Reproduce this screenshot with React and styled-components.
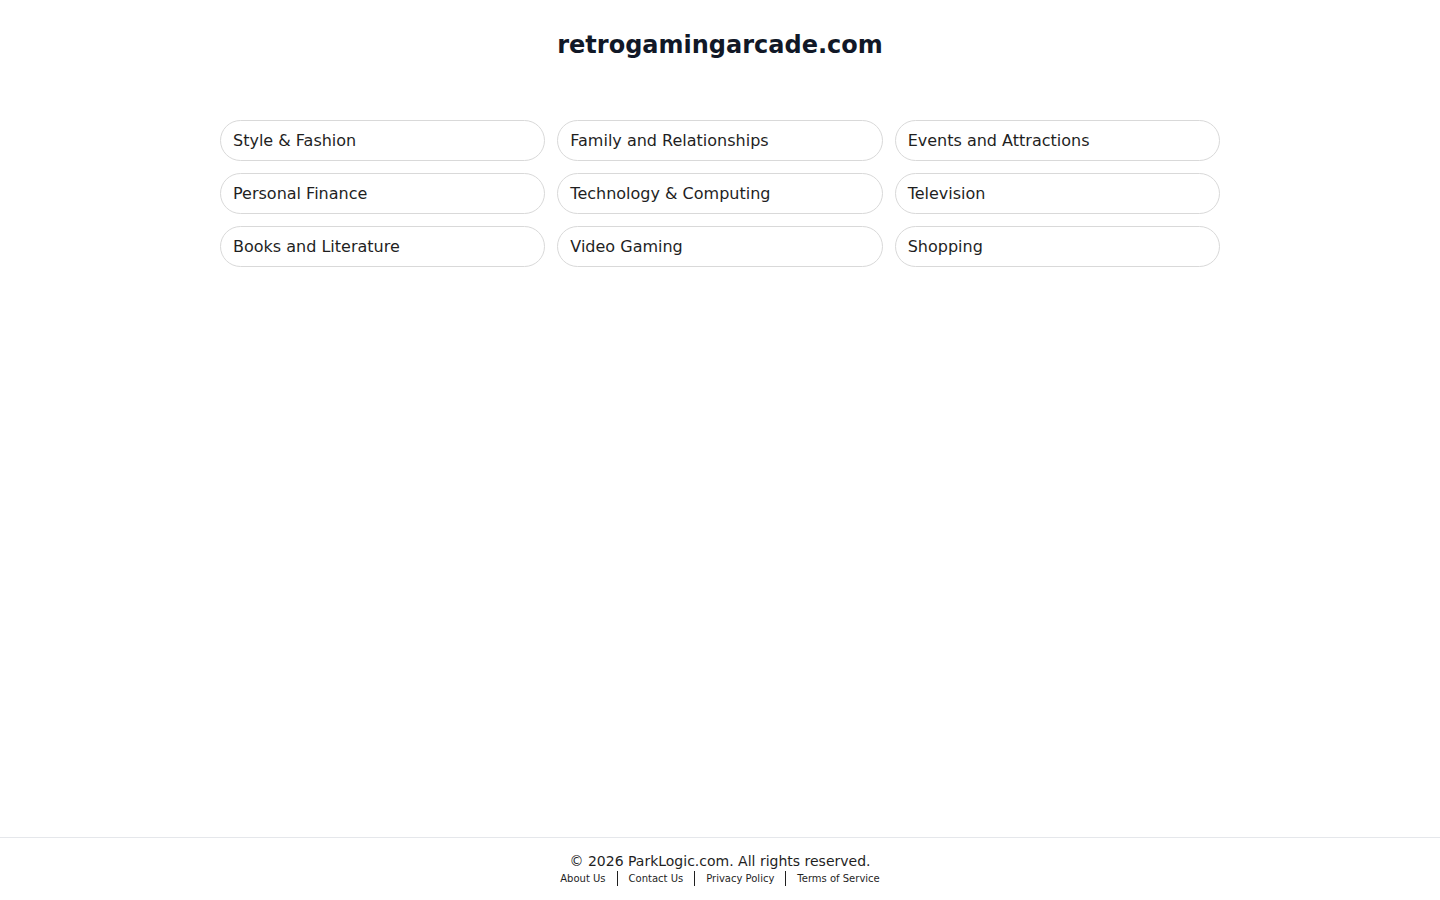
import React from "react";
import styled, { createGlobalStyle } from "styled-components";

const Global = createGlobalStyle`
  html, body { margin: 0; padding: 0; background: #fff; }
  body { font-family: "DejaVu Sans", "Liberation Sans", sans-serif; color: #111827; }
  * { box-sizing: border-box; }
`;

const Page = styled.div`
  min-height: 100vh;
  display: flex;
  flex-direction: column;
`;

const Main = styled.main`
  flex: 1;
  display: flex;
  flex-direction: column;
  align-items: center;
  padding-top: 29px;
`;

const Title = styled.h1`
  margin: 0;
  font-size: 24px;
  line-height: 32px;
  font-weight: 700;
  color: #111827;
`;

const Grid = styled.div`
  margin-top: 59px;
  width: 1000px;
  display: grid;
  grid-template-columns: repeat(3, 1fr);
  gap: 12px;
`;

const Pill = styled.a`
  display: flex;
  align-items: center;
  height: 41px;
  padding: 0 12px;
  border: 1px solid #d9d9d9;
  border-radius: 21px;
  font-size: 16px;
  color: #1f1f1f;
  text-decoration: none;
  background: #fff;
`;

const Footer = styled.footer`
  border-top: 1px solid #e5e7eb;
  padding: 13px 0 14px;
  display: flex;
  flex-direction: column;
  align-items: center;
`;

const Copy = styled.div`
  font-size: 14px;
  line-height: 20px;
  color: #1f1f1f;
`;

const Links = styled.nav`
  display: flex;
  align-items: center;
  font-size: 10px;
  line-height: 15px;
`;

const Link = styled.a`
  color: #1f1f1f;
  text-decoration: none;
  padding: 0 11px;
  border-left: ${(p) => (p.$first ? "none" : "1px solid #1f1f1f")};
  line-height: 15px;
`;

const items = [
  "Style & Fashion",
  "Family and Relationships",
  "Events and Attractions",
  "Personal Finance",
  "Technology & Computing",
  "Television",
  "Books and Literature",
  "Video Gaming",
  "Shopping",
];

export default function App() {
  return (
    <Page>
      <Global />
      <Main>
        <Title>retrogamingarcade.com</Title>
        <Grid>
          {items.map((t) => (
            <Pill key={t} href="#">{t}</Pill>
          ))}
        </Grid>
      </Main>
      <Footer>
        <Copy>© 2026 ParkLogic.com. All rights reserved.</Copy>
        <Links>
          {["About Us", "Contact Us", "Privacy Policy", "Terms of Service"].map((l, i) => (
            <Link key={l} href="#" $first={i === 0}>{l}</Link>
          ))}
        </Links>
      </Footer>
    </Page>
  );
}
